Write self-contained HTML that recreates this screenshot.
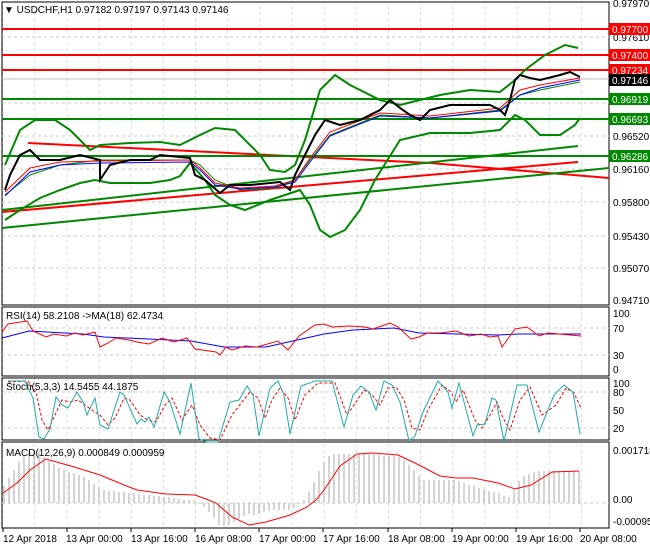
<!DOCTYPE html><html><head><style>
body{margin:0;background:#fff;width:650px;height:550px;overflow:hidden;font-family:"Liberation Sans",sans-serif}
svg text{font-family:"Liberation Sans",sans-serif;font-size:10px;fill:#000}
</style></head><body>
<svg width="650" height="550" xmlns="http://www.w3.org/2000/svg">
<defs><pattern id="g" x="3" y="0" width="32.15" height="550" patternUnits="userSpaceOnUse"><line x1="32" y1="0" x2="32" y2="550" stroke="#c8c8c8" stroke-dasharray="3,3"/></pattern></defs>
<rect x="2" y="2" width="607" height="303" fill="url(#g)" stroke="#000"/>
<rect x="2" y="307" width="607" height="69" fill="url(#g)" stroke="#000"/>
<rect x="2" y="378" width="607" height="62" fill="url(#g)" stroke="#000"/>
<rect x="2" y="442" width="607" height="86" fill="url(#g)" stroke="#000"/>
<g stroke="#c8c8c8" stroke-dasharray="3,3">
<line x1="2" x2="609" y1="37" y2="37"/><line x1="2" x2="609" y1="70" y2="70"/><line x1="2" x2="609" y1="103" y2="103"/><line x1="2" x2="609" y1="136" y2="136"/><line x1="2" x2="609" y1="169" y2="169"/><line x1="2" x2="609" y1="202" y2="202"/><line x1="2" x2="609" y1="236" y2="236"/><line x1="2" x2="609" y1="268" y2="268"/>
<line x1="2" x2="609" y1="328" y2="328"/><line x1="2" x2="609" y1="355" y2="355"/>
<line x1="2" x2="609" y1="392" y2="392"/><line x1="2" x2="609" y1="428" y2="428"/>
<line x1="2" x2="609" y1="503" y2="503"/>
</g>
<g stroke-width="2" fill="none">
<polyline stroke="#f00" points="28,143 430,163 609,178"/>
<polyline stroke="#f00" points="2,212 578,162"/>
<polyline stroke="#080" points="2,210 578,146"/>
<polyline stroke="#080" points="2,228 609,168"/>
</g>
<g stroke-width="2">
<line x1="2" x2="609" y1="29" y2="29" stroke="#f00"/>
<line x1="2" x2="609" y1="55" y2="55" stroke="#f00"/>
<line x1="2" x2="609" y1="70" y2="70" stroke="#f00"/>
<line x1="2" x2="609" y1="99" y2="99" stroke="#080"/>
<line x1="2" x2="609" y1="119" y2="119" stroke="#080"/>
<line x1="2" x2="609" y1="156" y2="156" stroke="#080"/>
</g>
<line x1="2" x2="609" y1="79" y2="79" stroke="#c0c0c0"/>
<g stroke="#080" stroke-width="2" fill="none">
<polyline points="5,165 20,130 35,120 55,120 70,130 80,140 90,150 100,145 130,143 160,142 180,145 200,135 215,128 235,130 260,155 270,170 285,172 295,165 305,140 320,90 335,75 350,85 380,100 400,105 420,100 440,95 470,90 500,92 515,80 525,70 545,55 565,45 578,48"/>
<polyline points="5,220 20,210 40,198 60,190 80,183 95,180 110,183 150,183 170,180 180,176 190,163 205,180 215,195 230,205 245,210 270,200 285,195 300,190 310,205 320,230 330,237 345,230 360,210 375,180 400,140 430,133 470,133 500,130 515,115 525,120 540,135 560,135 575,125 580,118"/>
<polyline stroke-width="1" points="5,195 30,175 60,165 100,160 190,160 200,165 215,180 240,190 275,188 295,180 310,160 330,135 380,115 430,118 500,110 520,95 540,90 580,82"/>
</g>
<polyline fill="none" stroke="#f00" points="5,192 30,168 60,162 100,161 190,160 200,168 215,183 240,188 275,186 295,180 310,158 330,132 380,113 430,116 500,108 520,90 540,85 580,78"/>
<polyline fill="none" stroke="#00f" points="5,196 30,172 60,165 100,163 190,162 200,170 215,185 240,189 275,187 295,182 310,162 330,136 380,116 430,118 500,111 520,95 540,88 580,80"/>
<polyline fill="none" stroke="#000" stroke-width="2" points="5,190 10,175 20,155 30,150 40,160 60,160 80,155 100,160 100,180 110,165 130,160 150,160 160,155 190,158 195,175 205,180 220,193 230,185 250,185 280,182 290,190 295,175 305,155 315,135 325,120 340,125 360,120 380,110 390,100 400,108 410,115 420,120 430,110 450,105 470,105 490,105 500,110 505,115 510,100 515,80 520,75 530,78 540,80 560,75 570,72 580,77"/>
<text x="4" y="13">▼ USDCHF,H1  0.97182 0.97197 0.97143 0.97146</text>
<g>
<text x="613" y="7">0.97970</text><text x="613" y="41">0.97610</text><text x="613" y="140">0.96520</text><text x="613" y="173">0.96160</text><text x="613" y="206">0.95800</text><text x="613" y="240">0.95430</text><text x="613" y="272">0.95070</text><text x="613" y="304">0.94710</text>
</g>
<rect x="609" y="23" width="41" height="12" fill="#f00"/><text x="612" y="33" style="fill:#fff">0.97700</text>
<rect x="609" y="49" width="41" height="12" fill="#f00"/><text x="612" y="59" style="fill:#fff">0.97400</text>
<rect x="609" y="64" width="41" height="12" fill="#f00"/><text x="612" y="74" style="fill:#fff">0.97234</text>
<rect x="609" y="74" width="41" height="12" fill="#000"/><text x="612" y="84" style="fill:#fff">0.97146</text>
<rect x="609" y="93" width="41" height="12" fill="#080"/><text x="612" y="103" style="fill:#fff">0.96919</text>
<rect x="609" y="113" width="41" height="12" fill="#080"/><text x="612" y="123" style="fill:#fff">0.96693</text>
<rect x="609" y="150" width="41" height="12" fill="#080"/><text x="612" y="160" style="fill:#fff">0.96286</text>
<!-- RSI -->
<polyline fill="none" stroke="#00f" points="2,338 29,331 83,334 104,337 191,341 224,347 266,347 324,334 353,330 394,328 419,333 498,335 519,334 581,334"/>
<polyline fill="none" stroke="#f00" points="2,332 8,324 27,321 33,331 46,337 54,334 66,336 75,333 83,335 95,332 100,347 108,343 116,338 129,340 137,342 149,344 162,338 174,342 187,338 195,349 216,352 220,355 226,347 232,350 245,346 257,347 278,341 288,350 299,336 315,325 324,324 332,327 349,326 365,327 373,329 390,323 398,327 411,339 419,337 427,333 440,333 456,331 469,336 481,334 490,337 498,336 502,347 515,329 527,327 539,336 548,333 581,336"/>
<text x="6" y="319">RSI(14) 58.2108  -&gt;MA(18) 62.4734</text>
<text x="613" y="317">100</text><text x="613" y="332">70</text><text x="613" y="359">30</text><text x="613" y="373">0</text>
<!-- Stoch -->
<polyline fill="none" stroke="#f00" stroke-dasharray="3,2" points="8,382 28,381 36,392 42,420 48,430 55,415 62,400 70,402 78,400 85,405 92,410 100,415 108,425 115,418 124,398 130,400 140,415 148,420 156,422 165,405 172,398 182,420 192,405 200,425 210,438 220,440 232,415 242,402 250,392 258,398 265,418 272,400 280,388 288,398 295,420 305,395 318,383 335,383 347,415 356,402 364,390 372,395 380,405 388,388 396,387 404,400 412,428 420,430 428,410 442,385 451,392 456,402 463,390 475,420 482,428 490,415 497,402 503,418 510,430 520,400 530,387 542,415 556,405 566,388 574,393 581,408"/>
<polyline fill="none" stroke="#2aa" points="8,381 25,381 33,398 39,437 44,439 50,429 56,397 62,405 68,408 77,392 83,402 87,415 95,398 100,425 108,429 120,392 124,395 137,424 141,419 145,422 149,417 154,427 164,392 170,402 180,434 191,383 199,439 207,442 218,442 230,402 239,400 247,386 253,395 259,436 270,388 278,381 284,395 290,434 301,386 315,381 332,381 344,427 353,395 361,386 369,392 376,410 384,381 392,385 400,402 409,441 415,436 423,412 438,381 448,392 452,408 459,383 473,436 477,425 485,424 492,398 496,400 504,441 517,385 527,385 539,432 554,395 564,385 573,392 580,434"/>
<text x="6" y="390">Stoch(5,3,3) 14.5455 44.1875</text>
<text x="613" y="387">100</text><text x="613" y="396">80</text><text x="613" y="414">50</text><text x="613" y="432">20</text>
<!-- MACD histogram -->
<g stroke="#aaa">
<path d="M4 503V486M9 503V478M14 503V470M19 503V462M24 503V456M29 503V451M34 503V449M39 503V452M44 503V457M49 503V461M54 503V464M59 503V468M64 503V470M69 503V472M74 503V473M79 503V475M84 503V477M89 503V480M94 503V484M99 503V487M104 503V490M109 503V491M114 503V491M119 503V492M124 503V492M129 503V493M134 503V493M139 503V494M144 503V495M149 503V495M154 503V496M159 503V496M164 503V497M169 503V497M174 503V498M179 503V499M184 503V500M189 503V500M194 503V500M199 503V504M204 503V507M209 503V512M214 503V518M219 503V525M224 503V526M229 503V525M234 503V522M239 503V519M244 503V516M249 503V514M254 503V515M259 503V514M264 503V512M269 503V511M274 503V510M279 503V510M284 503V510M289 503V510M294 503V508M299 503V504M304 503V500M309 503V492M314 503V482M319 503V471M324 503V462M329 503V456M334 503V454M339 503V454M344 503V454M349 503V454M354 503V454M359 503V454M364 503V454M369 503V454M374 503V454M379 503V455M384 503V456M389 503V456M394 503V456M399 503V457M404 503V460M409 503V465M414 503V470M419 503V476M424 503V480M429 503V480M434 503V480M439 503V480M444 503V480M449 503V480M454 503V480M459 503V481M464 503V483M469 503V485M474 503V486M479 503V488M484 503V489M489 503V491M494 503V492M499 503V493M504 503V496M509 503V497M514 503V490M519 503V481M524 503V476M529 503V474M534 503V472M539 503V471M544 503V471M549 503V471M554 503V471M559 503V471M564 503V471M569 503V471M574 503V471M579 503V471"/>
</g>
<polyline fill="none" stroke="#f00" points="3,493 17,483 30,470 46,459 60,463 71,466 100,475 124,485 137,490 166,494 195,495 206,499 216,503 224,510 232,517 249,525 266,522 290,515 307,507 316,500 324,490 332,478 340,466 357,454 373,453 398,455 415,463 440,476 456,478 473,478 498,483 515,489 531,485 552,472 579,471"/>
<text x="6" y="456">MACD(12,26,9) 0.000849 0.000959</text>
<text x="613" y="454">0.001718</text><text x="613" y="503">0.00</text><text x="613" y="525">-0.000952</text>
<g stroke="#000"><path d="M3 528v4M67 528v4M131 528v4M195 528v4M259 528v4M323 528v4M388 528v4M452 528v4M516 528v4M580 528v4"/></g>
<g>
<text x="3" y="542">12 Apr 2018</text><text x="66" y="542">13 Apr 00:00</text><text x="131" y="542">13 Apr 16:00</text><text x="195" y="542">16 Apr 08:00</text><text x="259" y="542">17 Apr 00:00</text><text x="323" y="542">17 Apr 16:00</text><text x="388" y="542">18 Apr 08:00</text><text x="452" y="542">19 Apr 00:00</text><text x="516" y="542">19 Apr 16:00</text><text x="580" y="542">20 Apr 08:00</text>
</g>
</svg>
</body></html>
